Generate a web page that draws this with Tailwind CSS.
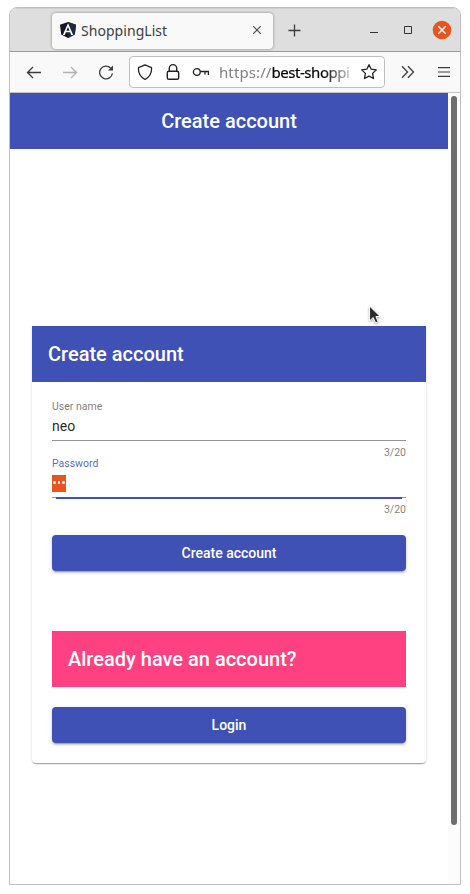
<!DOCTYPE html>
<html lang="en">
<head>
<meta charset="utf-8">
<title>ShoppingList</title>
<script src="https://cdn.jsdelivr.net/npm/@tailwindcss/browser@4"></script>
</head>
<body class="bg-white w-[470px] h-[894px] overflow-hidden relative font-['Roboto',sans-serif]">
<div class="pl-[9px] pt-[7px]">
<div class="w-[452px] h-[878px] border border-[#c0c0c0] rounded-t-[8px] overflow-hidden flex flex-col bg-white">

  <!-- Tab strip -->
  <div class="h-[44px] shrink-0 bg-[#dedede] border-b border-[#999999] shadow-[inset_0_1px_0_#cfcfcf] flex items-center pl-[42px] font-['Noto_Sans',sans-serif]">
    <div class="w-[221px] h-[36px] mt-[2px] shrink-0 rounded-[4px] bg-[#f9f9fa] shadow-[0_0_3px_#80808c] flex items-center pl-[8px]">
      <svg class="w-[16px] h-[16px] shrink-0 -mt-px" viewBox="0 0 16 16"><path d="M8 0 16 2.7 14.8 12.5 8 16 1.2 12.5 0 2.7Z" fill="#111827"/><path d="M8 0 16 2.7 14.8 12.5 8 16Z" fill="#1e293b"/><path d="M8 1.3 2.8 12.9H4.8L5.900 10.300H10.100L11.200 12.900H13.200ZM8 4.900 9.600 8.700H6.400Z" fill="#fff"/></svg>
      <span class="ml-[5px] w-[89px] text-[14px] leading-[20px] tracking-[0.05px] text-[#3d3d3d] whitespace-nowrap">ShoppingList</span>
      <svg class="ml-[82px] w-[10px] h-[10px] shrink-0 -mt-px" viewBox="0 0 10 10" fill="none" stroke="#444" stroke-width="1.1"><path d="M1.2 1.2 8.8 8.8M8.8 1.2 1.2 8.8"/></svg>
    </div>
    <svg class="ml-[15px] w-[13px] h-[13px] shrink-0 mt-[2px]" viewBox="0 0 13 13" fill="none" stroke="#3c3c3c" stroke-width="1.3"><path d="M6.500 .5V12.500M.5 6.500H12.500"/></svg>
    <svg class="ml-[68px] w-[10px] h-[10px] shrink-0" viewBox="0 0 10 10"><path d="M1 7H9V8H1Z" fill="#333"/></svg>
    <svg class="ml-[25px] w-[8px] h-[8px] shrink-0" viewBox="0 0 8 8" fill="none" stroke="#333"><path d="M.5.5H7.5V7.5H.5Z"/></svg>
    <svg class="ml-[20px] w-[20px] h-[20px] shrink-0" viewBox="0 0 20 20"><circle cx="10" cy="10" r="9.3" fill="#e95420"/><path d="M6.3 6.3 13.7 13.7M13.7 6.3 6.3 13.7" stroke="#fff" stroke-width="1.4"/></svg>
  </div>

  <!-- Navigation toolbar -->
  <div class="h-[41px] shrink-0 bg-[#f9f9fa] border-b border-[#c4c4c6] flex items-center pl-[16px] font-['Noto_Sans',sans-serif]">
    <svg class="w-[16px] h-[16px] shrink-0" viewBox="0 0 16 16" fill="none" stroke="#3c3c3c" stroke-width="1.3"><path d="M15 8.5H1.5M7 3 1.5 8.5 7 14"/></svg>
    <svg class="ml-[20px] w-[16px] h-[16px] shrink-0" viewBox="0 0 16 16" fill="none" stroke="#b2b2b2" stroke-width="1.3"><path d="M1 8.5H14.5M9 3 14.5 8.5 9 14"/></svg>
    <svg class="ml-[20px] w-[16px] h-[16px] shrink-0" viewBox="0 0 16 16" fill="none" stroke="#3c3c3c" stroke-width="1.3"><path d="M12.6 4A6.4 6.4 0 1 0 14.4 9.2"/><path d="M15 1.5V6.5H10Z" fill="#3c3c3c" stroke="none"/></svg>
    <div class="ml-[15px] w-[256px] h-[32px] shrink-0 rounded-[4px] border border-[#bfbfc2] bg-white flex items-center pl-[7px]">
      <svg class="w-[16px] h-[16px] shrink-0" viewBox="0 0 16 16" fill="none" stroke="#222" stroke-width="1.3" stroke-linejoin="round"><path d="M8 .8 14.5 3.6C15 9 12.6 13 8 15.5 3.4 13 1 9 1.500 3.600Z"/></svg>
      <svg class="ml-[12px] w-[16px] h-[18px] shrink-0" viewBox="0 0 16 18" fill="none" stroke="#222" stroke-width="1.4"><rect x="2.3" y="8.3" width="11.4" height="8" rx="1.6"/><path d="M4.300 8V5.300A3.700 3.700 0 0 1 11.700 5.300V8"/></svg>
      <svg class="ml-[11px] w-[18px] h-[12px] shrink-0" viewBox="0 0 18 12" fill="none" stroke="#222" stroke-width="1.3"><circle cx="4.800" cy="6" r="3.400"/><path d="M8.200 5.500H16.400V9M13 5.500V8.500"/></svg>
      <div class="ml-[9px] w-[134px] whitespace-nowrap text-[15px] leading-[22px] text-black [mask-image:linear-gradient(to_right,black_104px,transparent_138px)]"><span class="text-[#808080] tracking-[0.1px]">https://</span><span class="tracking-[-0.45px] [-webkit-text-stroke:0.2px_black]">best-shoppi</span></div>
      <svg class="ml-[7px] w-[18px] h-[18px] shrink-0" viewBox="0 0 18 18" fill="none" stroke="#222" stroke-width="1.3" stroke-linejoin="round"><path d="M9 1.700 11.200 6.200 16.300 6.900 12.600 10.400 13.500 15.500 9 13.100 4.500 15.500 5.400 10.400 1.700 6.900 6.800 6.200Z"/></svg>
    </div>
    <svg class="ml-[15px] w-[16px] h-[14px] shrink-0" viewBox="0 0 16 14" fill="none" stroke="#3c3c3c" stroke-width="1.300"><path d="M2 1.300 7.500 7 2 12.700M8 1.300 13.500 7 8 12.700"/></svg>
    <svg class="ml-[22px] w-[12px] h-[10px] shrink-0" viewBox="0 0 12 10" stroke="#3c3c3c" stroke-width="1.200"><path d="M0 .6H12M0 5H12M0 9.400H12"/></svg>
  </div>

  <!-- Page viewport -->
  <div class="flex-1 flex">
    <main class="w-[438px]">
      <h1 class="h-[56px] bg-[#3f51b5] text-white text-[20px] leading-[56px] font-medium text-center">Create account</h1>
      <section class="mt-[177px] ml-[22px] w-[394px] h-[437px] rounded-b-[4px] bg-white shadow-[0_2px_1px_-1px_rgba(0,0,0,0.2),0_1px_1px_0_rgba(0,0,0,0.14),0_1px_3px_0_rgba(0,0,0,0.12)]">
        <h2 class="h-[56px] bg-[#3f51b5] text-white text-[20px] leading-[56px] font-medium pl-[16px]">Create account</h2>
        <div class="px-[20px] pt-[18px]">
          <div class="h-[57px]">
            <div class="text-[10.5px] leading-[14px] text-black/54">User name</div>
            <div class="h-[26px] pt-[4px] text-[14px] leading-[16px] text-black/87">neo</div>
            <div class="h-px bg-[#949494]"></div>
            <div class="pt-[5px] text-right text-[10.5px] leading-[14px] text-black/54">3/20</div>
          </div>
          <div class="h-[78px]">
            <div class="text-[10.5px] leading-[14px] text-[#3f51b5]/87">Password</div>
            <div class="h-[26px] pt-[4px]">
              <div class="w-[14px] h-[17px] bg-[#e95420] flex items-center justify-center gap-[1.800px] pb-[2px]">
                <i class="w-[2.800px] h-[2.800px] rounded-full bg-white"></i><i class="w-[2.800px] h-[2.800px] rounded-full bg-white"></i><i class="w-[2.800px] h-[2.800px] rounded-full bg-white"></i>
              </div>
            </div>
            <div class="h-px bg-[#949494] px-[4px]"><div class="h-[2px] bg-[#3f51b5]"></div></div>
            <div class="pt-[5px] text-right text-[10.5px] leading-[14px] text-black/54">3/20</div>
          </div>
          <button class="block w-full h-[36px] rounded-[4px] bg-[#3f51b5] text-white text-[14px] leading-[36px] font-medium shadow-[0_3px_1px_-2px_rgba(0,0,0,0.2),0_2px_2px_0_rgba(0,0,0,0.14),0_1px_5px_0_rgba(0,0,0,0.12)]">Create account</button>
          <h2 class="mt-[60px] h-[56px] bg-[#ff4081] text-white text-[20px] leading-[56px] font-medium pl-[16px]">Already have an account?</h2>
          <button class="mt-[20px] block w-full h-[36px] rounded-[4px] bg-[#3f51b5] text-white text-[14px] leading-[36px] font-medium shadow-[0_3px_1px_-2px_rgba(0,0,0,0.2),0_2px_2px_0_rgba(0,0,0,0.14),0_1px_5px_0_rgba(0,0,0,0.12)]">Login</button>
        </div>
      </section>
    </main>
    <div class="w-[12px] bg-[#fcfcfc] pl-[3px] pt-[3px]"><div class="w-[6px] h-[729px] rounded-full bg-[#6e6e6e]"></div></div>
  </div>
</div>
</div>

<!-- Mouse pointer -->
<svg class="absolute left-[367px] top-[303px] w-[18px] h-[22px] drop-shadow-[0_1px_1px_rgba(0,0,0,0.35)]" viewBox="0 0 18 22"><path d="M2.500 3V18L6.200 14.500 8.600 20 11.200 18.900 8.900 13.500H13.200Z" fill="#2b2b2b" stroke="#fff" stroke-width="1"/></svg>
</body>
</html>
